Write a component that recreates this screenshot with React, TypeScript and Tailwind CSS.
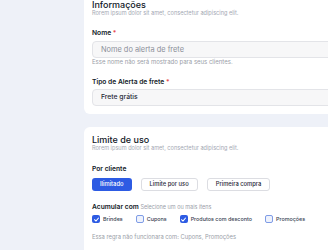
import React from "react";

function Check({ checked }: { checked?: boolean }) {
  return checked ? (
    <span className="flex h-[8px] w-[8px] items-center justify-center rounded-[2px] bg-[#2d5be3]">
      <svg viewBox="0 0 10 10" className="h-[7px] w-[7px]" fill="none">
        <path d="M2.2 5.3 4.2 7.2 7.9 2.9" stroke="white" strokeWidth="1.5" strokeLinecap="round" strokeLinejoin="round" />
      </svg>
    </span>
  ) : (
    <span className="h-[8px] w-[8px] rounded-[2px] border border-[#7f9ce6] bg-[#eef2fc]" />
  );
}

const options = [
  { label: "Brindes", checked: true },
  { label: "Cupons", checked: false },
  { label: "Produtos com desconto", checked: true },
  { label: "Promoções", checked: false },
];

export default function App() {
  return (
    <div
      className="h-[250px] w-[328px] overflow-hidden bg-[#eef1f8] pl-[84px]"
      style={{ fontFamily: "Inter, 'Noto Sans', sans-serif" }}
    >
      {/* Informações */}
      <div className="-mt-[8px] w-[290px] rounded-[6px] bg-white px-2 pt-[8px] pb-[8px]">
        <h2 className="text-[9px] font-medium leading-[10px] text-[#111827]">Informações</h2>
        <p className="text-[5.6px] leading-[6px] text-[#a3a8b3]">
          Rorem ipsum dolor sit amet, consectetur adipiscing elit.
        </p>

        <label className="mt-[13px] block text-[6.7px] font-semibold leading-[9px] text-[#111827]">
          Nome <span className="text-[#e5484d]">*</span>
        </label>
        <div className="mt-[3px] flex h-[17px] items-center rounded-[4px] border border-[#e3e4e8] bg-[#f7f7f8] px-2 text-[7.4px] text-[#8b8f98]">
          Nome do alerta de frete
        </div>
        <p className="text-[6px] leading-[8px] text-[#9a9ea8]">
          Esse nome não será mostrado para seus clientes.
        </p>

        <label className="mt-[12px] block text-[6.7px] font-semibold leading-[9px] text-[#111827]">
          Tipo de Alerta de frete <span className="text-[#e5484d]">*</span>
        </label>
        <div className="mt-[2px] flex h-[17px] items-center rounded-[4px] border border-[#e3e4e8] bg-[#f7f7f8] px-2 text-[6.8px] font-medium text-[#1f2937]">
          Frete grátis
        </div>
      </div>

      {/* Limite de uso */}
      <div className="mt-[13px] w-[290px] rounded-[6px] bg-white px-2 pt-[8px] pb-[16px]">
        <h2 className="text-[9px] font-medium leading-[10px] text-[#111827]">Limite de uso</h2>
        <p className="text-[5.6px] leading-[7px] text-[#a3a8b3]">
          Rorem ipsum dolor sit amet, consectetur adipiscing elit.
        </p>

        <p className="mt-[13px] text-[6.7px] font-semibold leading-[9px] text-[#111827]">Por cliente</p>
        <div className="mt-[4px] flex gap-[9px]">
          <button className="h-[13px] rounded-[3px] bg-[#2d5be3] px-[8px] text-[5.8px] font-medium text-white">
            Ilimitado
          </button>
          <button className="h-[13px] rounded-[3px] border border-[#dcdde2] bg-white px-[8px] text-[5.8px] font-medium text-[#1f2937]">
            Limite por uso
          </button>
          <button className="h-[13px] rounded-[3px] border border-[#dcdde2] bg-white px-[8px] text-[5.8px] font-medium text-[#1f2937]">
            Primeira compra
          </button>
        </div>

        <p className="mt-[12px] text-[6.7px] font-semibold leading-[9px] text-[#111827]">
          Acumular com{" "}
          <span className="text-[5.5px] font-normal text-[#9a9ea8]">Selecione um ou mais itens</span>
        </p>
        <div className="mt-[3px] flex h-[9px] items-center gap-[13px]">
          {options.map((o) => (
            <div key={o.label} className="flex items-center gap-[3px]">
              <Check checked={o.checked} />
              <span className="text-[5.4px] font-medium text-[#374151]">{o.label}</span>
            </div>
          ))}
        </div>
        <p className="mt-[9px] text-[5.8px] leading-[8px] text-[#9a9ea8]">
          Essa regra não funcionara com: Cupons, Promoções
        </p>
      </div>
    </div>
  );
}
